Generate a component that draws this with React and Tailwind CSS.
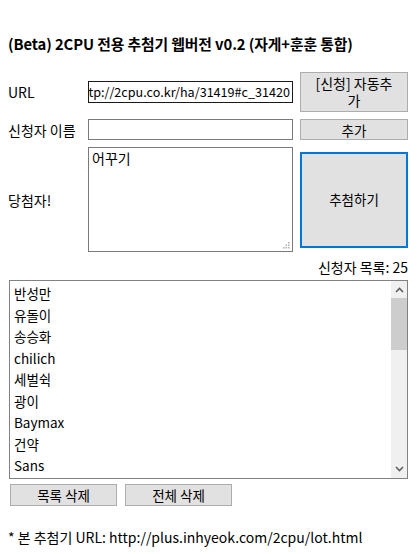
import React from "react";

const names = ["반성만", "유돌이", "송승화", "chilich", "세벌쉭", "광이", "Baymax", "건약", "Sans"];

const font = { fontFamily: '"Noto Sans CJK KR", "Noto Sans", sans-serif' };

const App = () => {
  return (
    <div className="w-[419px] h-[554px] bg-white text-black pl-2 pt-[34px] text-[14px]" style={font}>
      <h3 className="text-[14.8px] font-bold leading-5 tracking-[-0.1px] whitespace-nowrap">
        (Beta) 2CPU 전용 추첨기 웹버전 v0.2 (자게+훈훈 통합)
      </h3>

      <div className="mt-[18px] grid grid-cols-[73px_205px_108px] gap-x-[7px] gap-y-[7px] items-center">
        <div className="leading-5">URL</div>
        <div className="h-[22px] border border-[#1a1a1a] flex justify-end items-center overflow-hidden whitespace-nowrap pr-[2px] text-[12.6px]">
          http://2cpu.co.kr/ha/31419#c_31420
        </div>
        <button className="h-10 bg-[#e1e1e1] border border-[#adadad] text-[14px] leading-[17px] px-[12px]">
          [신청] 자동추가
        </button>

        <div className="leading-5 whitespace-nowrap">신청자 이름</div>
        <div className="h-[21px] border border-[#7a7a7a]"></div>
        <button className="h-[21px] bg-[#e1e1e1] border border-[#adadad] text-[13.5px] leading-4">추가</button>

        <div className="leading-5">당첨자!</div>
        <div className="relative h-[105px] border border-[#7a7a7a] px-[3px] text-[14px] leading-5">
          어꾸기
          <svg className="absolute right-[2px] bottom-[2px]" width="7" height="7" viewBox="0 0 7 7">
            <rect x="5" y="0" width="1.5" height="1.5" fill="#b0b0b0" />
            <rect x="2.5" y="2.5" width="1.5" height="1.5" fill="#b0b0b0" />
            <rect x="5" y="2.5" width="1.5" height="1.5" fill="#b0b0b0" />
            <rect x="0" y="5" width="1.5" height="1.5" fill="#b0b0b0" />
            <rect x="2.5" y="5" width="1.5" height="1.5" fill="#b0b0b0" />
            <rect x="5" y="5" width="1.5" height="1.5" fill="#b0b0b0" />
          </svg>
        </div>
        <button className="h-24 bg-[#e1e1e1] border-2 border-[#0078d7] text-[13.5px]">추첨하기</button>
      </div>

      <div className="w-[400px] text-right mt-[5px] leading-5">신청자 목록: 25</div>

      <div className="ml-px mt-[3px] w-[399px] h-[199px] border border-[#828282] flex">
        <div className="flex-1 overflow-hidden pt-[2px] pl-[4px] text-[13.5px]">
          {names.map((n) => (
            <div key={n} className="h-[21.5px] leading-[21.5px]">{n}</div>
          ))}
        </div>
        <div className="w-[16px] bg-[#f0f0f0] flex flex-col items-center">
          <svg className="mt-[6px]" width="9" height="6" viewBox="0 0 9 6">
            <path d="M1 5 L4.5 1.5 L8 5" stroke="#606060" strokeWidth="1.6" fill="none" />
          </svg>
          <div className="mt-[5px] w-full h-[52px] bg-[#cdcdcd]"></div>
          <div className="flex-1"></div>
          <svg className="mb-[6px]" width="9" height="6" viewBox="0 0 9 6">
            <path d="M1 1 L4.5 4.5 L8 1" stroke="#606060" strokeWidth="1.6" fill="none" />
          </svg>
        </div>
      </div>

      <div className="mt-[5px] ml-[2px] flex gap-2">
        <button className="w-[107px] h-[22px] bg-[#e1e1e1] border border-[#adadad] text-[13.5px] leading-5">목록 삭제</button>
        <button className="w-[107px] h-[22px] bg-[#e1e1e1] border border-[#adadad] text-[13.5px] leading-5">전체 삭제</button>
      </div>

      <p className="mt-[21px] text-[14px] leading-5">
        * 본 추첨기 URL: http://plus.inhyeok.com/2cpu/lot.html
      </p>
    </div>
  );
};

export default App;
